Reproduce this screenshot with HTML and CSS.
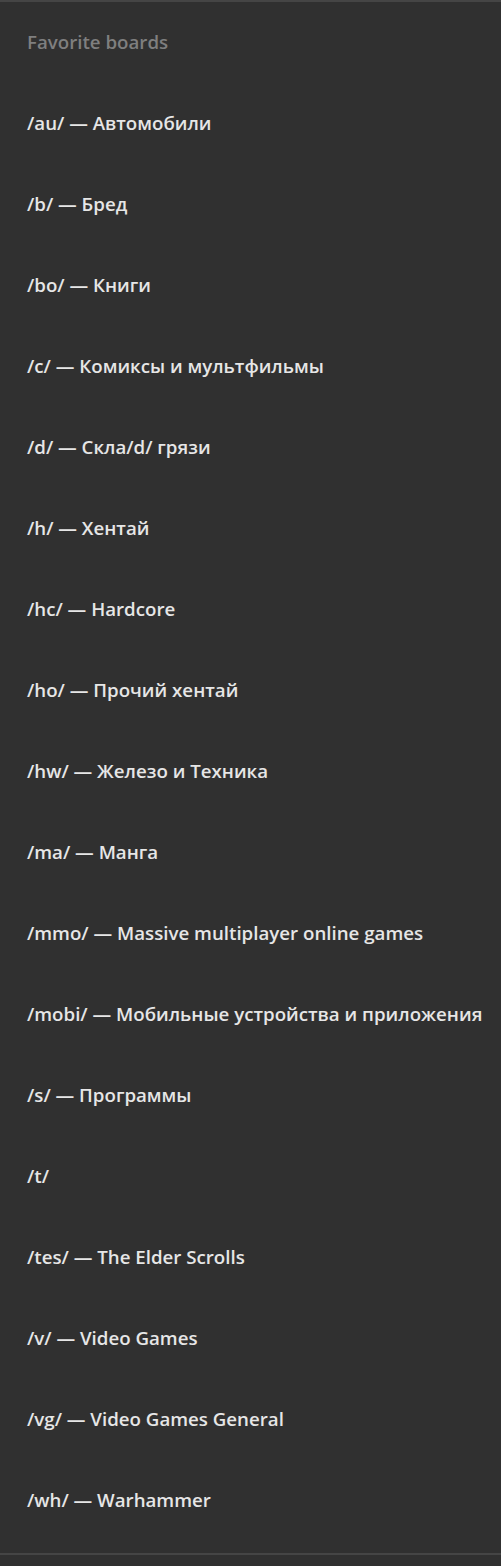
FILE: index.html
```html
<!DOCTYPE html>
<html>
<head>
<meta charset="utf-8">
<link rel="stylesheet" href="styles.css">
</head>
<body>
<div class="panel">
  <div class="row header">Favorite boards</div>
  <div class="row">/au/ — Автомобили</div>
  <div class="row">/b/ — Бред</div>
  <div class="row">/bo/ — Книги</div>
  <div class="row">/c/ — Комиксы и мультфильмы</div>
  <div class="row">/d/ — Скла/d/ грязи</div>
  <div class="row">/h/ — Хентай</div>
  <div class="row">/hc/ — Hardcore</div>
  <div class="row">/ho/ — Прочий хентай</div>
  <div class="row">/hw/ — Железо и Техника</div>
  <div class="row">/ma/ — Манга</div>
  <div class="row">/mmo/ — Massive multiplayer online games</div>
  <div class="row">/mobi/ — Мобильные устройства и приложения</div>
  <div class="row">/s/ — Программы</div>
  <div class="row">/t/</div>
  <div class="row">/tes/ — The Elder Scrolls</div>
  <div class="row">/v/ — Video Games</div>
  <div class="row">/vg/ — Video Games General</div>
  <div class="row">/wh/ — Warhammer</div>
</div>
</body>
</html>
```

FILE: styles.css
```css
html, body {
  margin: 0;
  padding: 0;
  background: #303030;
}
.panel {
  border-top: 2px solid #454545;
  border-bottom: 2px solid #454545;
  padding-bottom: 12px;
  margin-bottom: 11px;
  display: flex;
  flex-direction: column;
  font-family: "Open Sans", sans-serif;
}
.row {
  height: 81px;
  display: flex;
  align-items: center;
  padding-left: 27px;
  padding-bottom: 2px;
  box-sizing: border-box;
  font-size: 18.7px;
  font-weight: 600;
  color: #e6e6e6;
  white-space: nowrap;
}
.header {
  color: #7f7f7f;
}
```
